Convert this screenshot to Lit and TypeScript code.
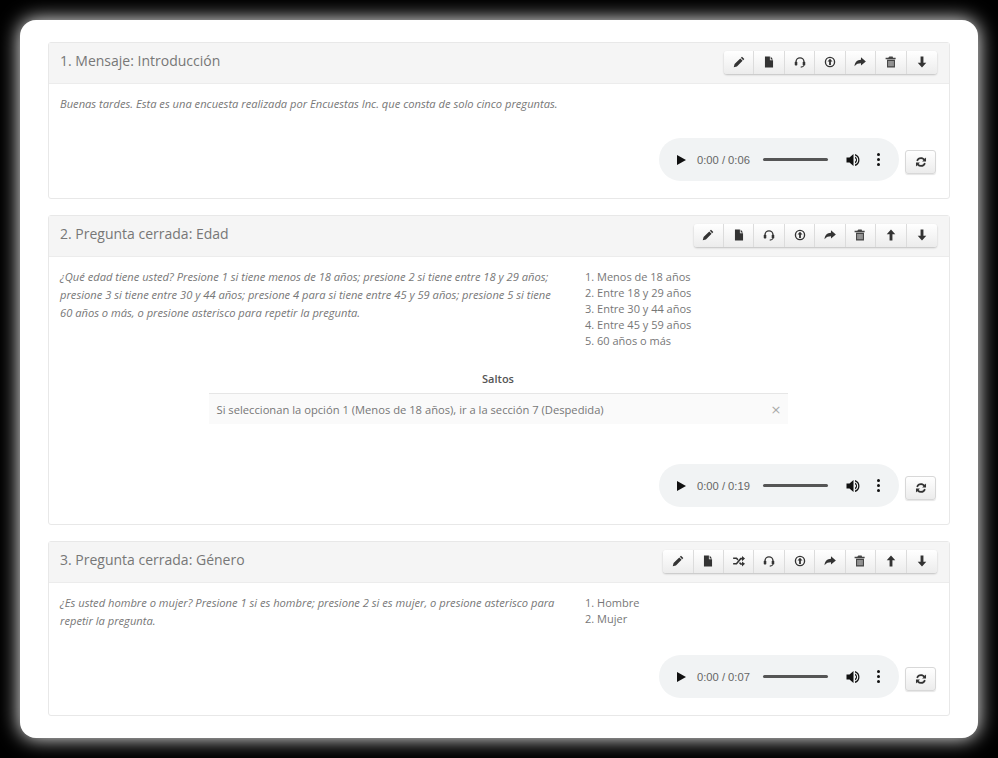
import { LitElement, html, css, svg } from "lit";
import { customElement } from "lit/decorators.js";

const icons: Record<string, unknown> = {
  pencil: svg`<path d="M12 .9l3.100 3.100-1.500 1.500-3.100-3.100zM9.700 3.200l3.100 3.100-7.600 7.600-4.200 1.200 1.100-4.300z"/>`,
  file: svg`<path d="M2.600 .8h6.600v5h4.200v9.400H2.600zM10.200 .8l3.200 3.900h-3.200z"/>`,
  headset: svg`<path d="M2.700 10V7.800a5.300 5.300 0 0 1 10.600 0V10" fill="none" stroke="#333" stroke-width="1.700"/><rect x="1" y="7.800" width="3.400" height="5" rx="1"/><rect x="11.600" y="7.800" width="3.400" height="5" rx="1"/><path d="M13.300 12.500c-.5 1.500-2 2.300-4.300 2.300" fill="none" stroke="#333" stroke-width="1.400"/>`,
  upload: svg`<path fill-rule="evenodd" d="M8 1a7 7 0 1 1 0 14A7 7 0 0 1 8 1zm0 1.800a5.200 5.200 0 1 0 0 10.400A5.200 5.200 0 0 0 8 2.800zM8 3.800l3.300 3.500H9.200v4.700H6.800V7.300H4.700z"/>`,
  share: svg`<path d="M9.300 1.800L15.800 7.300l-6.500 5.500V9.600c-3.500 0-6 .8-8.600 3.900.4-4.900 3.400-8.200 8.600-8.400z"/>`,
  trash: svg`<path d="M5.800 .8h4.400l.5 1.400h3.500v2H.8v-2h3.500zM2.700 5.100h10.600v10.100H2.700zM4.800 6.700v7h1.100v-7zm2.600 0v7h1.200v-7zm2.700 0v7h1.100v-7z" fill="#444"/>`,
  up: svg`<path d="M8 .6l5.700 6.400H9.900v8.400H6.100V7H2.300z"/>`,
  down: svg`<path d="M8 15.400L2.300 9h3.800V.6h3.800V9h3.800z"/>`,
  random: svg`<path d="M12 1.300L16 4.800 12 8.300V6h-1.200L5.100 12.800H.2v-2.200h3.900l5.700-6.800H12zM.2 3.200h4.900l2.200 2.500-1.400 1.700-1.700-2H.2zM9.400 9.300l1.500 1.700H12V8.500l4 3.300-4 3.500v-2.300H9.800L8 10.900z"/>`,
  refresh: svg`<path d="M8 1.600c1.900 0 3.700.8 5 2.100l1.700-1.600v5.100H9.500l1.700-1.700A4.500 4.500 0 0 0 8 3.900a4.400 4.400 0 0 0-4.200 3L1.700 6.100A6.700 6.700 0 0 1 8 1.600zM1.300 8.800h5.200l-1.700 1.800A4.500 4.500 0 0 0 8 12.100a4.400 4.400 0 0 0 4.200-3l2.100.8A6.700 6.700 0 0 1 8 14.400a6.900 6.900 0 0 1-5-2.100l-1.700 1.600z"/>`,
};

const icon = (name: string) =>
  html`<svg class="ico" viewBox="0 0 16 16" aria-hidden="true">${icons[name]}</svg>`;

interface Q {
  title: string;
  tools: string[];
  text: string[];
  options?: string[];
  jump?: string;
  time: string;
}

const base = ["pencil", "file", "headset", "upload", "share", "trash"];

const questions: Q[] = [
  {
    title: "1. Mensaje: Introducción",
    tools: [...base, "down"],
    text: ["Buenas tardes. Esta es una encuesta realizada por Encuestas Inc. que consta de solo cinco preguntas."],
    time: "0:00 / 0:06",
  },
  {
    title: "2. Pregunta cerrada: Edad",
    tools: [...base, "up", "down"],
    text: [
      "¿Qué edad tiene usted? Presione 1 si tiene menos de 18 años; presione 2 si tiene entre 18 y 29 años;",
      "presione 3 si tiene entre 30 y 44 años; presione 4 para si tiene entre 45 y 59 años; presione 5 si tiene",
      "60 años o más, o presione asterisco para repetir la pregunta.",
    ],
    options: ["1. Menos de 18 años", "2. Entre 18 y 29 años", "3. Entre 30 y 44 años", "4. Entre 45 y 59 años", "5. 60 años o más"],
    jump: "Si seleccionan la opción 1 (Menos de 18 años), ir a la sección 7 (Despedida)",
    time: "0:00 / 0:19",
  },
  {
    title: "3. Pregunta cerrada: Género",
    tools: ["pencil", "file", "random", "headset", "upload", "share", "trash", "up", "down"],
    text: [
      "¿Es usted hombre o mujer? Presione 1 si es hombre; presione 2 si es mujer, o presione asterisco para",
      "repetir la pregunta.",
    ],
    options: ["1. Hombre", "2. Mujer"],
    time: "0:00 / 0:07",
  },
];

@customElement("app-root")
export class AppRoot extends LitElement {
  static styles = css`
    :host {
      display: block;
      height: 758px;
      box-sizing: border-box;
      padding: 20px;
      background: #000;
      font-family: "Open Sans", sans-serif;
      color: #666;
      overflow: hidden;
    }
    .card {
      height: 718px;
      box-sizing: border-box;
      padding: 22px 28px;
      background: #fff;
      border-radius: 16px;
      box-shadow: 0 0 20px #fff;
    }
    .panel {
      border: 1px solid #e8e8e8;
      border-radius: 3px;
      margin-bottom: 16px;
    }
    .head {
      height: 41px;
      box-sizing: border-box;
      display: flex;
      justify-content: space-between;
      align-items: center;
      padding: 0 12px 0 11px;
      background: #f5f5f5;
      border-bottom: 1px solid #ececec;
    }
    .title {
      font-size: 14px;
      line-height: 20px;
      color: #777;
      margin-top: -4px;
    }
    .tools {
      display: flex;
      margin-bottom: 2px;
      border-radius: 3px;
      box-shadow: 0 1px 2px rgba(0, 0, 0, 0.22);
    }
    .tool {
      width: 30.45px;
      height: 23px;
      display: flex;
      align-items: center;
      justify-content: center;
      box-sizing: border-box;
      border-right: 1px solid #dcdcdc;
      background: linear-gradient(#fff, #ececec);
    }
    .tool:first-child {
      border-radius: 3px 0 0 3px;
    }
    .tool:last-child {
      border-right: 0;
      border-radius: 0 3px 3px 0;
    }
    .ico {
      width: 12px;
      height: 12px;
      fill: #333;
      display: block;
    }
    .body {
      padding: 11px 13px 17px 11px;
    }
    .cols {
      display: flex;
      gap: 30px;
    }
    .text {
      width: 495px;
      flex: none;
      font-size: 11.15px;
      line-height: 18px;
      font-style: italic;
      color: #777;
      white-space: nowrap;
    }
    .text.wide {
      width: auto;
    }
    .opts {
      font-size: 11px;
      line-height: 16px;
      color: #777;
      padding-top: 1px;
    }
    .jumps {
      width: 579px;
      margin: 22px auto 0;
    }
    .jumps h4 {
      margin: 0;
      height: 23px;
      box-sizing: border-box;
      text-align: center;
      font-size: 11px;
      line-height: 16px;
      font-weight: 600;
      color: #555;
      border-bottom: 1px solid #e6e6e6;
    }
    .jump {
      height: 30px;
      display: flex;
      align-items: center;
      justify-content: space-between;
      padding: 0 6px 0 8px;
      background: #fafafa;
      font-size: 11.2px;
      color: #777;
    }
    .x {
      font-size: 13px;
      line-height: 1;
      color: #aaa;
      font-family: "DejaVu Sans", sans-serif;
    }
    .media {
      display: flex;
      justify-content: flex-end;
      align-items: flex-start;
      gap: 6px;
      margin-top: 25px;
    }
    .media.far {
      margin-top: 40px;
    }
    .audio {
      width: 240px;
      height: 43px;
      display: flex;
      align-items: center;
      border-radius: 22px;
      background: #f1f3f4;
      box-sizing: border-box;
      padding-left: 18px;
    }
    .play {
      width: 0;
      height: 0;
      border-left: 9px solid #111;
      border-top: 5px solid transparent;
      border-bottom: 5px solid transparent;
    }
    .time {
      margin-left: 11px;
      width: 66px;
      font-family: "Liberation Sans", sans-serif;
      font-size: 11.2px;
      color: #666;
      white-space: nowrap;
    }
    .track {
      width: 65px;
      height: 3px;
      border-radius: 2px;
      background: #555;
    }
    .vol {
      width: 16px;
      height: 16px;
      margin-left: 17px;
      fill: #111;
      display: block;
    }
    .dots {
      width: 3px;
      margin-left: 16px;
      display: flex;
      flex-direction: column;
      gap: 2px;
    }
    .dots i {
      width: 3px;
      height: 3px;
      border-radius: 50%;
      background: #111;
    }
    .reload {
      width: 31px;
      height: 24px;
      margin-top: 12px;
      display: flex;
      align-items: center;
      justify-content: center;
      box-sizing: border-box;
      border: 1px solid #d8d8d8;
      border-radius: 3px;
      background: linear-gradient(#fff, #ececec);
      box-shadow: 0 1px 1px rgba(0, 0, 0, 0.1);
    }
  `;

  private renderQuestion(q: Q) {
    return html`<section class="panel">
      <header class="head">
        <div class="title">${q.title}</div>
        <div class="tools">${q.tools.map((t) => html`<div class="tool">${icon(t)}</div>`)}</div>
      </header>
      <div class="body">
        <div class="cols">
          <div class="text ${q.options ? "" : "wide"}">${q.text.map((l) => html`<div>${l}</div>`)}</div>
          ${q.options ? html`<div class="opts">${q.options.map((o) => html`<div>${o}</div>`)}</div>` : ""}
        </div>
        ${q.jump
          ? html`<div class="jumps">
              <h4>Saltos</h4>
              <div class="jump"><span>${q.jump}</span><span class="x">×</span></div>
            </div>`
          : ""}
        <div class="media ${q.jump ? "far" : ""}">
          <div class="audio">
            <div class="play"></div>
            <div class="time">${q.time}</div>
            <div class="track"></div>
            <svg class="vol" viewBox="0 0 16 16" aria-hidden="true">
              <path d="M1.500 5.500h3L8.500 2v12l-4-3.500h-3zM10 4.600a3.800 3.800 0 0 1 0 6.800V9.700a2.200 2.200 0 0 0 0-3.400zM10 1.900a6.400 6.400 0 0 1 0 12.200v-1.500a4.900 4.900 0 0 0 0-9.200z"/>
            </svg>
            <div class="dots"><i></i><i></i><i></i></div>
          </div>
          <div class="reload">${icon("refresh")}</div>
        </div>
      </div>
    </section>`;
  }

  render() {
    return html`<main class="card">${questions.map((q) => this.renderQuestion(q))}</main>`;
  }
}
